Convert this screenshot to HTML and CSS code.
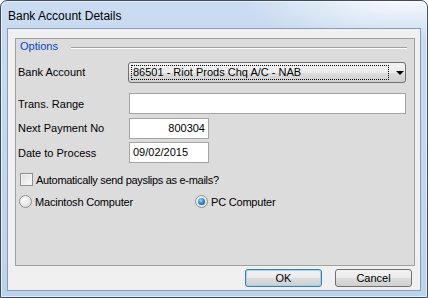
FILE: index.html
```html
<!DOCTYPE html>
<html lang="en">
<head>
    <meta charset="UTF-8">
    <title>Bank Account Details</title>
    <link rel="stylesheet" href="styles.css">
</head>
<body>

    <div class="window">
        <div class="titlebar">Bank Account Details</div>

        <div class="client">
            <div class="group">
                <div class="legend">
                    <span class="legend-text">Options</span>
                    <span class="rule"></span>
                </div>

                <div class="row row-bank">
                    <label class="lbl">Bank Account</label>
                    <div class="select">
                        <span class="focus">86501 - Riot Prods Chq A/C - NAB</span>
                        <span class="arrow"></span>
                    </div>
                </div>

                <div class="row row-range">
                    <label class="lbl">Trans. Range</label>
                    <div class="input wide"></div>
                </div>

                <div class="row row-next">
                    <label class="lbl">Next Payment No</label>
                    <div class="input short num">800304</div>
                </div>

                <div class="row row-date">
                    <label class="lbl">Date to Process</label>
                    <div class="input short">09/02/2015</div>
                </div>

                <div class="check">
                    <span class="box"></span>
                    <span class="check-text">Automatically send payslips as e-mails?</span>
                </div>

                <div class="radios">
                    <div class="radio mac"><span class="dot"></span>Macintosh Computer</div>
                    <div class="radio on"><span class="dot"></span>PC Computer</div>
                </div>
            </div>

            <div class="buttons">
                <button class="btn default">OK</button>
                <button class="btn">Cancel</button>
            </div>
        </div>
    </div>

</body>
</html>
```

FILE: styles.css
```css
* {
    margin: 0;
    padding: 0;
    box-sizing: border-box;
}

body {
    background: #ffffff;
    font-family: 'Liberation Sans', Arial, sans-serif;
    font-size: 11px;
    color: #000;
}

.window {
    width: 428px;
    height: 298px;
    border: 1px solid #3f4b5b;
    border-radius: 7px 7px 0 0;
    background:
        radial-gradient(ellipse 160px 40px at 400px 0, rgba(255, 255, 255, 0.85), rgba(255, 255, 255, 0)),
        linear-gradient(180deg, #c9dcf1 0%, #bcd3ec 100%);
    padding: 0 6px 6px 6px;
    display: flex;
    flex-direction: column;
    box-shadow: inset 0 0 0 1px rgba(255, 255, 255, 0.6);
}

.titlebar {
    height: 27px;
    font-size: 12px;
    line-height: 31px;
    padding-left: 1px;
    color: #000;
}

.client {
    flex: 1;
    background: #f0f0f0;
    border: 1px solid #8a9cb4;
    padding: 9px 5px 0 7px;
    display: flex;
    flex-direction: column;
}

.group {
    height: 228px;
    background: #dcdcdc;
    border: 1px solid #a0a0a0;
}

.legend {
    height: 13px;
    display: flex;
    align-items: center;
    padding: 0 7px 0 4px;
}

.legend-text {
    color: #0046d5;
    font-size: 11px;
}

.rule {
    flex: 1;
    height: 2px;
    margin: 5px 0 0 13px;
    border-top: 1px solid #a0a0a0;
    border-bottom: 1px solid #ffffff;
}

.row {
    display: flex;
    align-items: center;
    height: 21px;
    padding-left: 2px;
}

.lbl {
    width: 110px;
    font-size: 11px;
}

.row-bank .lbl,
.row-next .lbl {
    padding-bottom: 2px;
}

.row-bank { margin-top: 10px; }
.row-range { margin-top: 10px; }
.row-next { margin-top: 4px; }
.row-date { margin-top: 3px; }

.select {
    width: 278px;
    height: 21px;
    border: 1px solid #707070;
    border-radius: 3px;
    background: linear-gradient(180deg, #f2f2f2 0%, #ebebeb 50%, #dddddd 51%, #cfcfcf 100%);
    display: flex;
    align-items: center;
    padding: 0 0 0 2px;
}

.focus {
    width: 258px;
    height: 15px;
    border: 1px dotted #000;
    line-height: 13px;
    padding-left: 1px;
    white-space: nowrap;
}

.arrow {
    width: 0;
    height: 0;
    margin-left: 7px;
    border-left: 4px solid transparent;
    border-right: 4px solid transparent;
    border-top: 4px solid #000;
}

.input {
    height: 21px;
    background: #ffffff;
    border: 1px solid #a5a5a5;
    line-height: 19px;
    padding: 0 3px;
    margin-left: 1px;
}

.wide { width: 277px; }
.short { width: 80px; }
.num { text-align: right; }

.check {
    display: flex;
    align-items: center;
    margin-top: 10px;
    padding-left: 4px;
    height: 13px;
}

.check-text {
    letter-spacing: -0.3px;
}

.box {
    width: 13px;
    height: 13px;
    border: 1px solid #8f8f8f;
    background: linear-gradient(135deg, #dcdcdc 0%, #fbfbfb 100%);
    box-shadow: inset 0 0 0 1px #f4f4f4;
    margin-right: 3px;
}

.radios {
    display: flex;
    align-items: center;
    margin-top: 9px;
    padding-left: 3px;
    height: 13px;
}

.radio {
    display: flex;
    align-items: center;
    letter-spacing: -0.2px;
}

.mac { width: 176px; }

.dot {
    width: 13px;
    height: 13px;
    border-radius: 50%;
    border: 1px solid #8e8f8f;
    background: radial-gradient(circle at 35% 35%, #fdfdfd 0%, #d6d6d6 100%);
    margin-right: 3px;
    position: relative;
}

.on .dot::after {
    content: "";
    position: absolute;
    left: 2px;
    top: 2px;
    width: 7px;
    height: 7px;
    border-radius: 50%;
    background: radial-gradient(circle at 40% 35%, #8fdcff 0%, #1f7fc4 55%, #0b3f73 100%);
}

.buttons {
    display: flex;
    justify-content: flex-end;
    gap: 13px;
    margin-top: 3px;
    padding-right: 3px;
}

.btn {
    width: 77px;
    height: 18px;
    font-family: 'Liberation Sans', Arial, sans-serif;
    font-size: 11px;
    color: #000;
    border: 1px solid #707070;
    border-radius: 3px;
    background: linear-gradient(180deg, #f2f2f2 0%, #ebebeb 50%, #dddddd 51%, #cfcfcf 100%);
}

.default {
    border-color: #3c7fb1;
    box-shadow: inset 0 0 0 1px #9ed3f4;
}
```
